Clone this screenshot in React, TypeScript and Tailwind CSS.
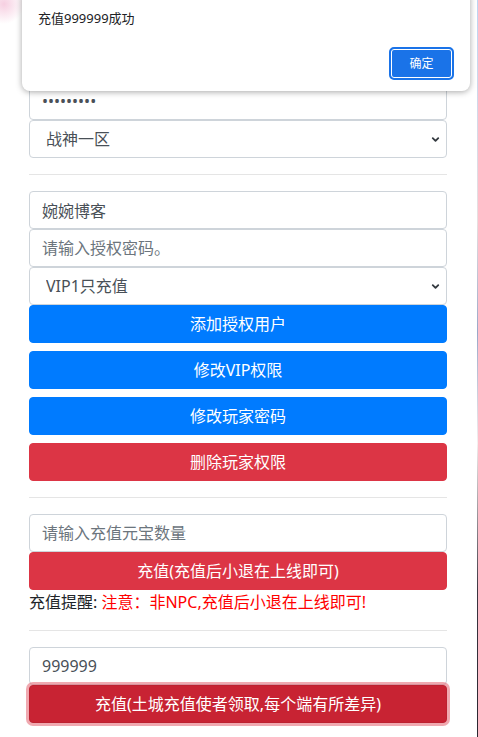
import { ChevronDown } from 'lucide-react'

const font = "font-['Noto_Sans','Noto_Sans_CJK_SC',sans-serif]"

function TextInput({ value, placeholder, type = 'text' }: { value?: string; placeholder?: string; type?: string }) {
  return (
    <input
      type={type}
      defaultValue={value}
      placeholder={placeholder}
      className="block h-[38px] w-full rounded border border-[#ced4da] bg-white px-3 text-base text-[#495057] outline-none placeholder:text-[#6c757d]"
    />
  )
}

function Select({ options }: { options: string[] }) {
  return (
    <div className="relative">
      <select className="block h-[38px] w-full appearance-none rounded border border-[#ced4da] bg-white pl-4 pr-8 text-base text-[#495057] outline-none">
        {options.map((o) => (
          <option key={o}>{o}</option>
        ))}
      </select>
      {/* arrow */}
      <ChevronDown className="pointer-events-none absolute right-[6px] top-[14px] h-[11px] w-[11px] text-[#343a40]" strokeWidth={4} />
    </div>
  )
}

function Btn({ children, tone }: { children: React.ReactNode; tone: 'blue' | 'red' | 'redFocus' }) {
  const cls =
    tone === 'blue'
      ? 'bg-[#007bff] border-[#007bff]'
      : tone === 'red'
        ? 'bg-[#dc3545] border-[#dc3545]'
        : 'bg-[#c82333] border-[#bd2130] shadow-[0_0_0_3px_rgba(225,83,97,0.5)]'
  return (
    <button className={`block h-[38px] w-full rounded border text-center text-base leading-[36px] text-white ${cls}`}>
      {children}
    </button>
  )
}

function Divider() {
  return <hr className="my-4 border-0 border-t border-[rgba(0,0,0,0.1)]" />
}

export default function App() {
  return (
    <div className={`${font} relative flex min-h-[737px] bg-white`}>
      {/* page body */}
      <div className="w-[477px] bg-[radial-gradient(circle_at_4px_4px,#f6cfe1,transparent_20px)]">
        <div className="ml-[29px] w-[418px] pt-[44px] pb-4">
          <TextInput value="admin" />
          <TextInput type="password" value="123456789" />
          <Select options={['战神一区']} />

          <Divider />

          <TextInput value="婉婉博客" />
          <TextInput placeholder="请输入授权密码。" />
          <Select options={['VIP1只充值']} />
          <div className="flex flex-col gap-2">
            <Btn tone="blue">添加授权用户</Btn>
            <Btn tone="blue">修改VIP权限</Btn>
            <Btn tone="blue">修改玩家密码</Btn>
            <Btn tone="red">删除玩家权限</Btn>
          </div>

          <Divider />

          <TextInput placeholder="请输入充值元宝数量" />
          <Btn tone="red">充值(充值后小退在上线即可)</Btn>
          <p className="h-6 text-base leading-6 text-[#212529]">
            充值提醒: <span className="text-[#ff0000]">注意：非NPC,充值后小退在上线即可!</span>
          </p>

          <Divider />

          <TextInput value="999999" />
          <Btn tone="redFocus">充值(土城充值使者领取,每个端有所差异)</Btn>
        </div>
      </div>
      {/* background image edge */}
      <div className="w-px bg-[linear-gradient(#bcd3f2,#e8dfe0_30%,#9aa7c8_45%,#f5efef_60%,#3a3440_80%,#2a2630)]" />

      {/* alert dialog */}
      <div className="absolute left-[22px] top-[-12px] h-[103px] w-[448px] rounded-lg bg-white shadow-[0_1px_6px_rgba(0,0,0,0.35)]">
        <p className="ml-4 mt-[22px] text-[13px] leading-[16px] text-[#202124]">充值999999成功</p>
        <div className="mt-[21px] flex justify-end pr-4">
          <button className="flex h-[33px] w-[65px] items-center justify-center rounded-[5px] border-2 border-[#1a73e8] bg-[#1a73e8] text-[12px] text-white shadow-[inset_0_0_0_1px_#ffffff]">
            确定
          </button>
        </div>
      </div>
    </div>
  )
}
